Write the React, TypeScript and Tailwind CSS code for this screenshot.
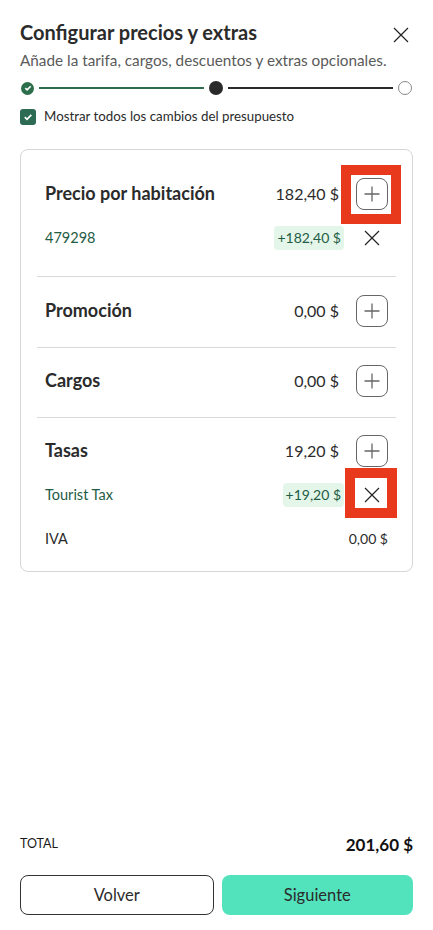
import React from "react";

const PlusBtn = () => (
  <button className="w-8 h-8 rounded-lg border border-[#666] flex items-center justify-center bg-white shrink-0">
    <svg width="18" height="18" viewBox="0 0 18 18" fill="none" stroke="#666" strokeWidth="1.3">
      <path d="M9 1.5V16.5M1.5 9H16.5" />
    </svg>
  </button>
);

const XIcon = ({ size = 16 }: { size?: number }) => (
  <svg width={size} height={size} viewBox="0 0 16 16" fill="none" stroke="#222" strokeWidth="1.2">
    <path d="M1 1L15 15M15 1L1 15" />
  </svg>
);

const Section = ({
  title,
  amount,
  children,
  highlightPlus,
  className,
}: {
  title: string;
  amount: string;
  children?: React.ReactNode;
  highlightPlus?: boolean;
  className: string;
}) => (
  <div className={className}>
    <div className="flex items-center h-8 px-2">
      <div className="flex-1 text-[18px] font-bold text-[#2b2b2b]">{title}</div>
      <div className="text-[16px] text-[#2b2b2b] mr-[17px]">{amount}</div>
      <div className="relative">
        <PlusBtn />
        {highlightPlus && (
          <div className="absolute left-[-15px] top-[-13px] w-[60px] h-[59px] border-[10px] border-[#e8391d] pointer-events-none" />
        )}
      </div>
    </div>
    {children}
  </div>
);

const SubRow = ({
  label,
  amount,
  highlightX,
}: {
  label: string;
  amount: string;
  highlightX?: boolean;
}) => (
  <div className="flex items-center h-8 px-2">
    <div className="flex-1 text-[14.5px] text-[#1f5c45]">{label}</div>
    <div className="bg-[#e4f6ea] text-[#1f5c45] text-[14px] rounded px-[3px] h-[24px] flex items-center mr-[12px]">
      {amount}
    </div>
    <div className="relative w-8 h-8 flex items-center justify-center">
      <XIcon size={16} />
      {highlightX && (
        <div className="absolute left-[-11px] top-[-11px] w-[52px] h-[50px] border-[10px] border-[#e8391d] pointer-events-none" />
      )}
    </div>
  </div>
);

export default function App() {
  return (
    <div
      className="h-[930px] w-[433px] bg-white flex flex-col text-[#2b2b2b]"
      style={{ fontFamily: "Lato, 'Noto Sans', sans-serif" }}
    >
      <div className="px-5 pt-[20px]">
        <div className="flex items-start justify-between">
          <h1 className="text-[20px] leading-6 font-bold text-[#2b2b2b]">Configurar precios y extras</h1>
          <div className="mt-[7px] mr-[4px]">
            <XIcon size={16} />
          </div>
        </div>
        <p className="text-[15.3px] leading-5 text-[#5a5a5a] mt-[6px]">
          Añade la tarifa, cargos, descuentos y extras opcionales.
        </p>
        <div className="flex items-center mt-[10px] h-4 px-[1px]">
          <div className="w-[13px] h-[13px] rounded-full bg-[#2c6e4c] flex items-center justify-center shrink-0">
            <svg width="8" height="8" viewBox="0 0 8 8" fill="none" stroke="white" strokeWidth="1.6">
              <path d="M1.3 4.2L3.1 5.9L6.7 2.2" />
            </svg>
          </div>
          <div className="flex-1 h-[2px] bg-[#2c6e4c] mx-[5px]" />
          <div className="w-[14px] h-[14px] rounded-full bg-[#2a2a2a] shrink-0" />
          <div className="flex-1 h-[2px] bg-[#2a2a2a] mx-[5px]" />
          <div className="w-[14px] h-[14px] rounded-full border border-[#888] bg-white shrink-0" />
        </div>
        <div className="flex items-center mt-[11px] gap-[8px]">
          <div className="w-4 h-4 rounded-[3px] bg-[#2e6b55] flex items-center justify-center">
            <svg width="10" height="10" viewBox="0 0 10 10" fill="none" stroke="white" strokeWidth="1.8">
              <path d="M1.8 5.2L4 7.3L8.3 2.8" />
            </svg>
          </div>
          <span className="text-[13.3px] text-[#2b2b2b]">Mostrar todos los cambios del presupuesto</span>
        </div>

        <div className="mt-[22px] border border-[#d6d6d6] rounded-lg px-4 pt-[11px]">
          <Section
            title="Precio por habitación"
            amount="182,40 $"
            highlightPlus
            className="pt-[17px] pb-[22px] border-b border-[#d9d9d9]"
          >
            <div className="mt-3">
              <SubRow label="479298" amount="+182,40 $" />
            </div>
          </Section>
          <Section title="Promoción" amount="0,00 $" className="pt-[18px] pb-[20px] border-b border-[#d9d9d9]" />
          <Section title="Cargos" amount="0,00 $" className="pt-[17px] pb-[20px] border-b border-[#d9d9d9]" />
          <Section title="Tasas" amount="19,20 $" className="pt-[17px] pb-[16px]">
            <div className="mt-3 flex flex-col gap-3">
              <SubRow label="Tourist Tax" amount="+19,20 $" highlightX />
              <div className="flex items-center h-8 px-2">
                <div className="flex-1 text-[14.5px] text-[#2b2b2b]">IVA</div>
                <div className="text-[14px] text-[#2b2b2b]">0,00 $</div>
              </div>
            </div>
          </Section>
        </div>
      </div>
      <div className="flex-1" />
      <div className="px-5 pb-[15px]">
        <div className="flex items-center justify-between">
          <span className="text-[12.5px] text-[#1a1a1a]">TOTAL</span>
          <span className="text-[17px] font-bold text-[#111]">201,60 $</span>
        </div>
        <div className="flex gap-[8px] mt-[18px]">
          <button className="flex-1 h-[40px] rounded-lg border border-[#333] text-[16.5px] text-[#2b2b2b]">Volver</button>
          <button className="flex-1 h-[40px] rounded-lg bg-[#52e3bd] text-[16.5px] text-[#2b2b2b]">Siguiente</button>
        </div>
      </div>
    </div>
  );
}
